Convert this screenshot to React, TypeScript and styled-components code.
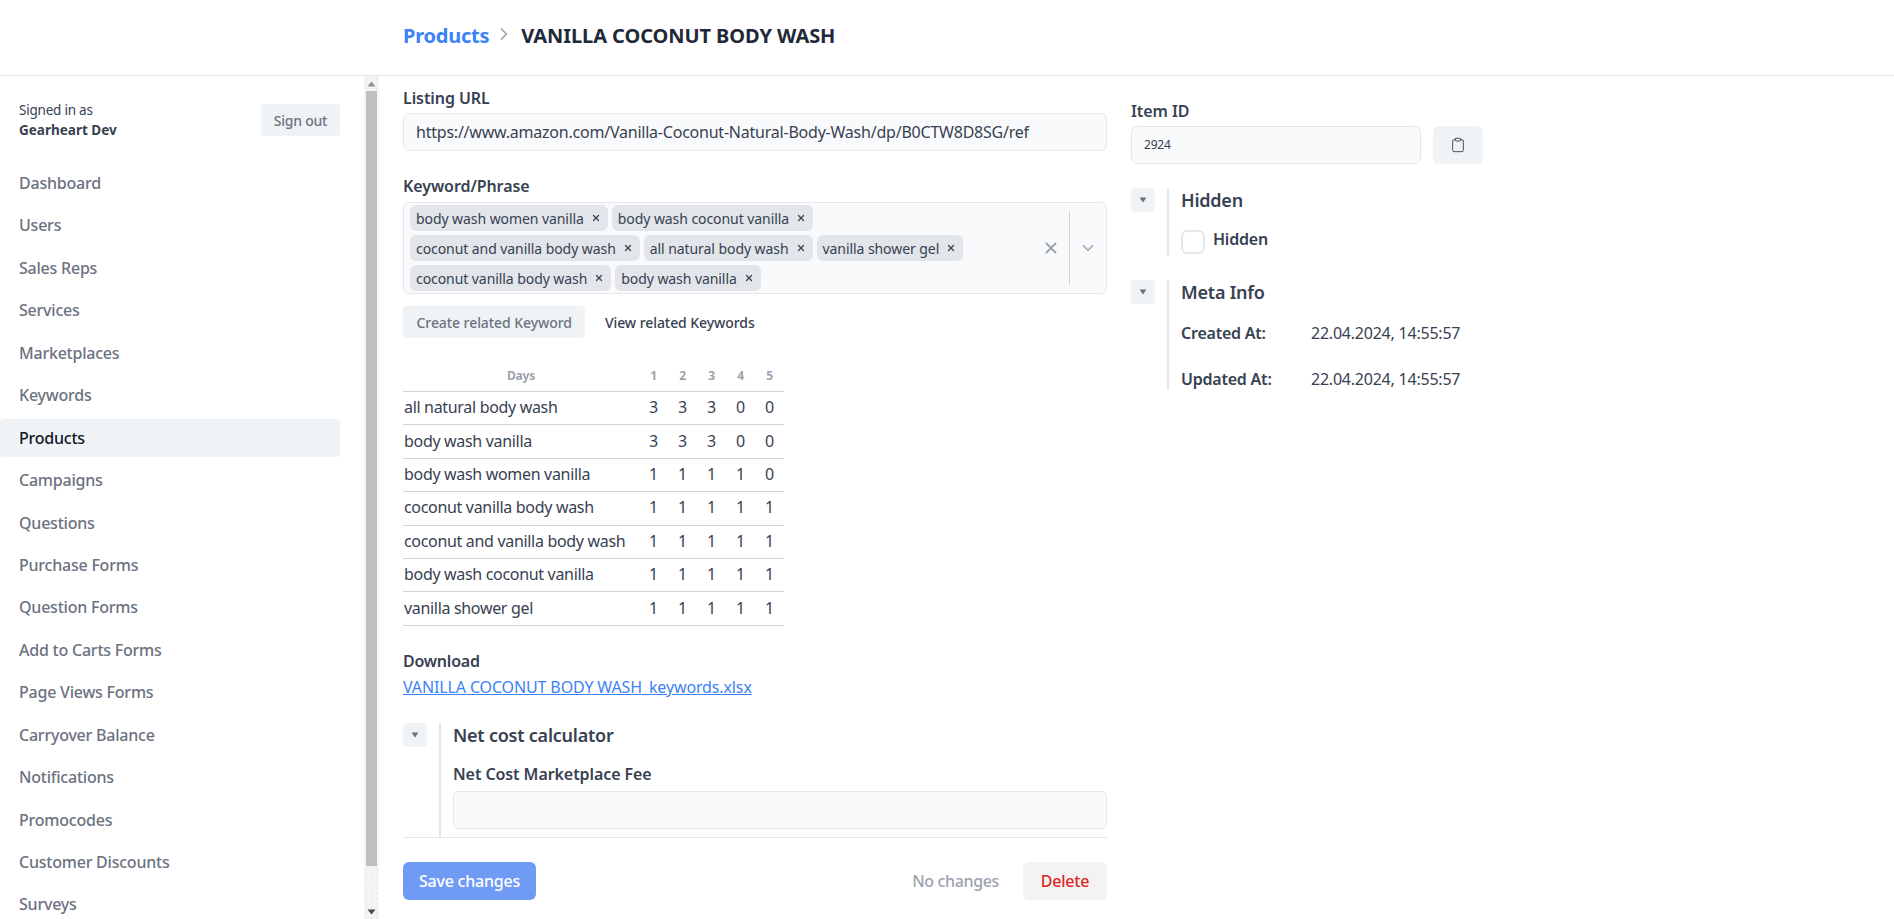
import React from 'react';
import styled, { createGlobalStyle } from 'styled-components';
import { ChevronDown, ChevronRight, Clipboard, X } from 'lucide-react';

const GlobalStyle = createGlobalStyle`
  html, body {
    margin: 0;
    height: 100%;
    overflow: hidden;
    background: #fff;
  }
  body {
    font-family: "Noto Sans", "Open Sans", sans-serif;
    color: #374151;
    letter-spacing: -0.014em;
  }
  * {
    box-sizing: border-box;
  }
  button {
    letter-spacing: inherit;
  }
`;

const NAV_ITEMS = [
  'Dashboard',
  'Users',
  'Sales Reps',
  'Services',
  'Marketplaces',
  'Keywords',
  'Products',
  'Campaigns',
  'Questions',
  'Purchase Forms',
  'Question Forms',
  'Add to Carts Forms',
  'Page Views Forms',
  'Carryover Balance',
  'Notifications',
  'Promocodes',
  'Customer Discounts',
  'Surveys',
];

const TAG_ROWS = [
  ['body wash women vanilla', 'body wash coconut vanilla'],
  ['coconut and vanilla body wash', 'all natural body wash', 'vanilla shower gel'],
  ['coconut vanilla body wash', 'body wash vanilla'],
];

const KEYWORD_ROWS: [string, number[]][] = [
  ['all natural body wash', [3, 3, 3, 0, 0]],
  ['body wash vanilla', [3, 3, 3, 0, 0]],
  ['body wash women vanilla', [1, 1, 1, 1, 0]],
  ['coconut vanilla body wash', [1, 1, 1, 1, 1]],
  ['coconut and vanilla body wash', [1, 1, 1, 1, 1]],
  ['body wash coconut vanilla', [1, 1, 1, 1, 1]],
  ['vanilla shower gel', [1, 1, 1, 1, 1]],
];

const App = () => {
  return (
    <Page>
      <GlobalStyle />
      <Header>
        <Crumb>Products</Crumb>
        <CrumbArrow>
          <ChevronRight size={20} strokeWidth={2} />
        </CrumbArrow>
        <Title>VANILLA COCONUT BODY WASH</Title>
      </Header>

      <Body>
        <Sidebar>
          <SideContent>
            <UserRow>
              <UserText>
                <div>Signed in as</div>
                <strong>Gearheart Dev</strong>
              </UserText>
              <SignOut>Sign out</SignOut>
            </UserRow>
            <Nav>
              {NAV_ITEMS.map((item) => (
                <NavItem key={item} $active={item === 'Products'}>
                  {item}
                </NavItem>
              ))}
            </Nav>
          </SideContent>
          {/* the scrollbar of the reference, drawn */}
          <ScrollTrack>
            <ScrollArrow>
              <svg width="9" height="6" viewBox="0 0 9 6">
                <path d="M4.5 0.5L8.5 5.5H0.5z" fill="#8f8f94" />
              </svg>
            </ScrollArrow>
            <ScrollThumb />
            <ScrollRest />
            <ScrollArrow>
              <svg width="9" height="6" viewBox="0 0 9 6">
                <path d="M0.5 0.5H8.5L4.5 5.5z" fill="#4b4b55" />
              </svg>
            </ScrollArrow>
          </ScrollTrack>
        </Sidebar>

        <Main>
          <LeftColumn>
            <Label>Listing URL</Label>
            <Input>https://www.amazon.com/Vanilla-Coconut-Natural-Body-Wash/dp/B0CTW8D8SG/ref</Input>

            <KeywordLabel>Keyword/Phrase</KeywordLabel>
            <SelectBox>
              <TagArea>
                {TAG_ROWS.map((row, i) => (
                  <TagRow key={i}>
                    {row.map((tag) => (
                      <Tag key={tag}>
                        {tag}
                        <TagRemove>
                          <X size={10} strokeWidth={3} />
                        </TagRemove>
                      </Tag>
                    ))}
                  </TagRow>
                ))}
              </TagArea>
              <ClearIcon>
                <X size={18} strokeWidth={2.5} />
              </ClearIcon>
              <SelectDivider />
              <SelectArrow>
                <ChevronDown size={18} strokeWidth={2} />
              </SelectArrow>
            </SelectBox>

            <ActionRow>
              <SoftButton>Create related Keyword</SoftButton>
              <GhostButton>View related Keywords</GhostButton>
            </ActionRow>

            <KeywordTable>
              <thead>
                <tr>
                  <HeadCell>Days</HeadCell>
                  {[1, 2, 3, 4, 5].map((day) => (
                    <HeadCell key={day}>{day}</HeadCell>
                  ))}
                </tr>
              </thead>
              <tbody>
                {KEYWORD_ROWS.map(([name, counts]) => (
                  <tr key={name}>
                    <NameCell>{name}</NameCell>
                    {counts.map((count, i) => (
                      <CountCell key={i}>{count}</CountCell>
                    ))}
                  </tr>
                ))}
              </tbody>
            </KeywordTable>

            <DownloadLabel>Download</DownloadLabel>
            <DownloadLink href="#">VANILLA COCONUT BODY WASH_keywords.xlsx</DownloadLink>

            <Section $top={24} $height={114}>
              <CollapseButton />
              <SectionBody>
                <SectionTitle>Net cost calculator</SectionTitle>
                <FeeLabel>Net Cost Marketplace Fee</FeeLabel>
                <Input />
              </SectionBody>
            </Section>

            <Footer>
              <SaveButton>Save changes</SaveButton>
              <FooterRight>
                <NoChanges>No changes</NoChanges>
                <DeleteButton>Delete</DeleteButton>
              </FooterRight>
            </Footer>
          </LeftColumn>

          <RightColumn>
            <Label>Item ID</Label>
            <IdRow>
              <IdInput>2924</IdInput>
              <CopyButton>
                <Clipboard size={16} strokeWidth={1.5} />
              </CopyButton>
            </IdRow>

            <Section $top={24} $height={68}>
              <CollapseButton />
              <SectionBody>
                <SectionTitle>Hidden</SectionTitle>
                <CheckRow>
                  <CheckBox />
                  <CheckLabel>Hidden</CheckLabel>
                </CheckRow>
              </SectionBody>
            </Section>

            <Section $top={24} $height={110}>
              <CollapseButton />
              <SectionBody>
                <SectionTitle>Meta Info</SectionTitle>
                <MetaRow>
                  <MetaKey>Created At:</MetaKey>
                  <MetaValue>22.04.2024, 14:55:57</MetaValue>
                </MetaRow>
                <MetaRow>
                  <MetaKey>Updated At:</MetaKey>
                  <MetaValue>22.04.2024, 14:55:57</MetaValue>
                </MetaRow>
              </SectionBody>
            </Section>
          </RightColumn>
        </Main>
      </Body>
    </Page>
  );
};

const CollapseButton = () => (
  <CollapseBox>
    <svg width="8" height="6" viewBox="0 0 8 6">
      <path d="M0.5 0.5h7L4 5.5z" fill="#6b7280" />
    </svg>
  </CollapseBox>
);

const Page = styled.div`
  height: 919px;
  display: flex;
  flex-direction: column;
  overflow: hidden;
`;

// top bar with breadcrumb
const Header = styled.header`
  height: 76px;
  flex: none;
  display: flex;
  align-items: center;
  padding: 0 0 5px 403px;
  border-bottom: 1px solid #e5e7eb;
`;

const Crumb = styled.a`
  font-size: 20px;
  font-weight: 700;
  letter-spacing: -0.012em;
  color: #3b82f6;
`;

const CrumbArrow = styled.span`
  display: flex;
  margin: -2px 7px 0 5px;
  color: #9ca3af;
`;

const Title = styled.h1`
  margin: 0;
  font-size: 20px;
  font-weight: 700;
  letter-spacing: -0.004em;
  color: #1f2937;
`;

const Body = styled.div`
  flex: 1;
  display: flex;
  min-height: 0;
`;

const Sidebar = styled.aside`
  width: 379px;
  flex: none;
  display: flex;
  overflow: hidden;
`;

const SideContent = styled.div`
  width: 364px;
  flex: none;
  padding: 28px 24px 0 0;
  overflow: hidden;
`;

const ScrollTrack = styled.div`
  width: 15px;
  flex: none;
  display: flex;
  flex-direction: column;
  background-color: #f4f4f6;
  background-image: radial-gradient(#dcdce0 0.6px, transparent 0.8px);
  background-size: 5px 5px;
`;

const ScrollArrow = styled.div`
  height: 15px;
  flex: none;
  display: flex;
  align-items: center;
  justify-content: center;
`;

const ScrollThumb = styled.div`
  height: 775px;
  flex: none;
  margin: 0 2px;
  background: #bfbfbf;
`;

const ScrollRest = styled.div`
  flex: 1;
`;

const UserRow = styled.div`
  display: flex;
  align-items: center;
  justify-content: space-between;
  padding-left: 19px;
  height: 32px;
`;

const UserText = styled.div`
  font-size: 13.5px;
  line-height: 20px;
  color: #374151;

  strong {
    font-weight: 700;
    letter-spacing: 0;
  }
`;

const SignOut = styled.button`
  width: 79px;
  height: 32px;
  border: 0;
  border-radius: 4px;
  background: #f0f3f6;
  color: #6b7280;
  font: 500 14px "Noto Sans", sans-serif;
`;

const Nav = styled.nav`
  display: flex;
  flex-direction: column;
  gap: 4.05px;
  margin-top: 28px;
`;

const NavItem = styled.a<{ $active?: boolean }>`
  display: block;
  flex: none;
  height: 38.4px;
  line-height: 38.4px;
  padding-left: 19px;
  border-radius: 4px;
  font-size: 16px;
  font-weight: 500;
  color: ${(p) => (p.$active ? '#111827' : '#6b7280')};
  background: ${(p) => (p.$active ? '#f0f3f6' : 'transparent')};
`;

const Main = styled.main`
  flex: 1;
  display: flex;
  gap: 24px;
  padding-left: 24px;
  min-width: 0;
`;

const LeftColumn = styled.div`
  width: 704px;
  flex: none;
`;

const RightColumn = styled.div`
  width: 352px;
  flex: none;
  padding-top: 13px;
`;

const Label = styled.div`
  font-size: 16px;
  font-weight: 600;
  line-height: 24px;
  height: 24px;
  margin: 10px 0 3px;
  letter-spacing: -0.005em;
  color: #374151;
`;

const KeywordLabel = styled(Label)`
  margin-top: 23px;
  margin-bottom: 4px;
`;

const Input = styled.div`
  height: 38px;
  line-height: 36px;
  padding: 0 12px;
  border: 1px solid #e5e7eb;
  border-radius: 6px;
  background: #f9fafb;
  font-size: 16px;
  color: #374151;
  white-space: nowrap;
  overflow: hidden;
`;

const SelectBox = styled.div`
  height: 92px;
  display: flex;
  align-items: center;
  border: 1px solid #e5e7eb;
  border-radius: 6px;
  background: #f9fafb;
  padding: 0 0 0 6px;
`;

const TagArea = styled.div`
  flex: 1;
  display: flex;
  flex-direction: column;
  gap: 4px;
`;

const TagRow = styled.div`
  display: flex;
  gap: 4px;
`;

const Tag = styled.span`
  height: 26px;
  display: inline-flex;
  align-items: center;
  gap: 7px;
  padding: 0 7px 0 6px;
  border-radius: 6px;
  background: #e2e5ea;
  font-size: 14px;
  letter-spacing: -0.005em;
  color: #374151;
`;

const TagRemove = styled.span`
  display: flex;
  color: #374151;
`;

const ClearIcon = styled.span`
  display: flex;
  color: #9ca3af;
  margin-right: 9px;
`;

const SelectDivider = styled.span`
  width: 1px;
  height: 74px;
  background: #d1d5db;
`;

const SelectArrow = styled.span`
  display: flex;
  padding: 0 9px;
  color: #9ca3af;
`;

const ActionRow = styled.div`
  display: flex;
  gap: 6px;
  margin-top: 12px;
`;

const SoftButton = styled.button`
  height: 32px;
  padding: 0 13.5px;
  border: 0;
  border-radius: 4px;
  background: #f0f3f6;
  color: #6b7280;
  font: 500 14px "Noto Sans", sans-serif;
  letter-spacing: -0.005em;
`;

const GhostButton = styled(SoftButton)`
  background: transparent;
  color: #374151;
`;

const KeywordTable = styled.table`
  width: 381px;
  margin-top: 21px;
  border-collapse: collapse;
`;

const HeadCell = styled.th`
  height: 32.5px;
  padding: 0;
  width: 29px;
  font-size: 12px;
  font-weight: 700;
  color: #9ca3af;
  text-align: center;
  border-bottom: 1px solid #d1d5db;

  &:first-child {
    width: auto;
  }
`;

const NameCell = styled.td`
  height: 33.4px;
  padding: 0 0 2px 1px;
  font-size: 16px;
  letter-spacing: -0.02em;
  color: #374151;
  white-space: nowrap;
  border-bottom: 1px solid #d1d5db;
`;

const CountCell = styled.td`
  padding: 0 0 2px;
  font-size: 16px;
  text-align: center;
  color: #374151;
  border-bottom: 1px solid #d1d5db;
`;

const DownloadLabel = styled.div`
  margin-top: 23px;
  font-size: 16px;
  font-weight: 600;
  line-height: 24px;
  color: #374151;
`;

const DownloadLink = styled.a`
  display: inline-block;
  font-size: 16px;
  line-height: 24px;
  margin-top: 2px;
  letter-spacing: -0.008em;
  color: #3b82f6;
  text-decoration: underline;
`;

// collapsible block with the grey rule on its left
const Section = styled.section<{ $top: number; $height: number }>`
  display: flex;
  margin-top: ${(p) => p.$top}px;
  height: ${(p) => p.$height}px;
`;

const CollapseBox = styled.button`
  width: 24px;
  height: 24px;
  flex: none;
  display: flex;
  align-items: center;
  justify-content: center;
  padding: 0;
  border: 0;
  border-radius: 4px;
  background: #f0f3f6;
`;

const SectionBody = styled.div`
  flex: 1;
  margin-left: 12px;
  padding-left: 12px;
  border-left: 2px solid #e5e7eb;
  min-width: 0;
`;

const SectionTitle = styled.h3`
  margin: 0;
  font-size: 18px;
  font-weight: 600;
  line-height: 24px;
  color: #374151;
`;

const FeeLabel = styled(Label)`
  margin: 15px 0 5px;
`;

const Footer = styled.div`
  display: flex;
  justify-content: space-between;
  align-items: center;
  border-top: 1px solid #e5e7eb;
  padding-top: 24px;
`;

const SaveButton = styled.button`
  height: 38px;
  padding: 0 16px;
  border: 0;
  border-radius: 6px;
  background: #6f9bf5;
  color: #fff;
  font: 500 16px "Noto Sans", sans-serif;
`;

const FooterRight = styled.div`
  display: flex;
  align-items: center;
  gap: 24px;
`;

const NoChanges = styled.span`
  font-size: 16px;
  font-weight: 500;
  letter-spacing: -0.022em;
  color: #9ca3af;
`;

const DeleteButton = styled.button`
  height: 38px;
  width: 84px;
  border: 0;
  border-radius: 6px;
  background: #f5f2f2;
  color: #dc2626;
  font: 500 16px "Noto Sans", sans-serif;
`;

const IdRow = styled.div`
  display: flex;
  gap: 12px;
`;

const IdInput = styled.div`
  width: 290px;
  height: 38px;
  line-height: 36px;
  padding: 0 12px;
  border: 1px solid #e5e7eb;
  border-radius: 6px;
  background: #f9fafb;
  font-size: 12px;
  color: #374151;
`;

const CopyButton = styled.button`
  width: 50px;
  height: 38px;
  display: flex;
  align-items: center;
  justify-content: center;
  border: 0;
  border-radius: 6px;
  background: #f0f3f6;
  color: #4b5563;
`;

const CheckRow = styled.div`
  display: flex;
  align-items: center;
  gap: 8px;
  margin-top: 18px;
`;

const CheckBox = styled.span`
  width: 24px;
  height: 24px;
  border: 2px solid #e5e7eb;
  border-radius: 6px;
  background: #fff;
`;

const CheckLabel = styled.span`
  font-size: 16px;
  font-weight: 600;
  color: #374151;
  margin-top: -6px;
`;

const MetaRow = styled.div`
  display: flex;
  height: 46px;
  padding-top: 17px;
  font-size: 16px;
  line-height: 24px;
`;

const MetaKey = styled.span`
  width: 130px;
  font-weight: 600;
  color: #374151;
`;

const MetaValue = styled.span`
  color: #374151;
`;

export default App;
